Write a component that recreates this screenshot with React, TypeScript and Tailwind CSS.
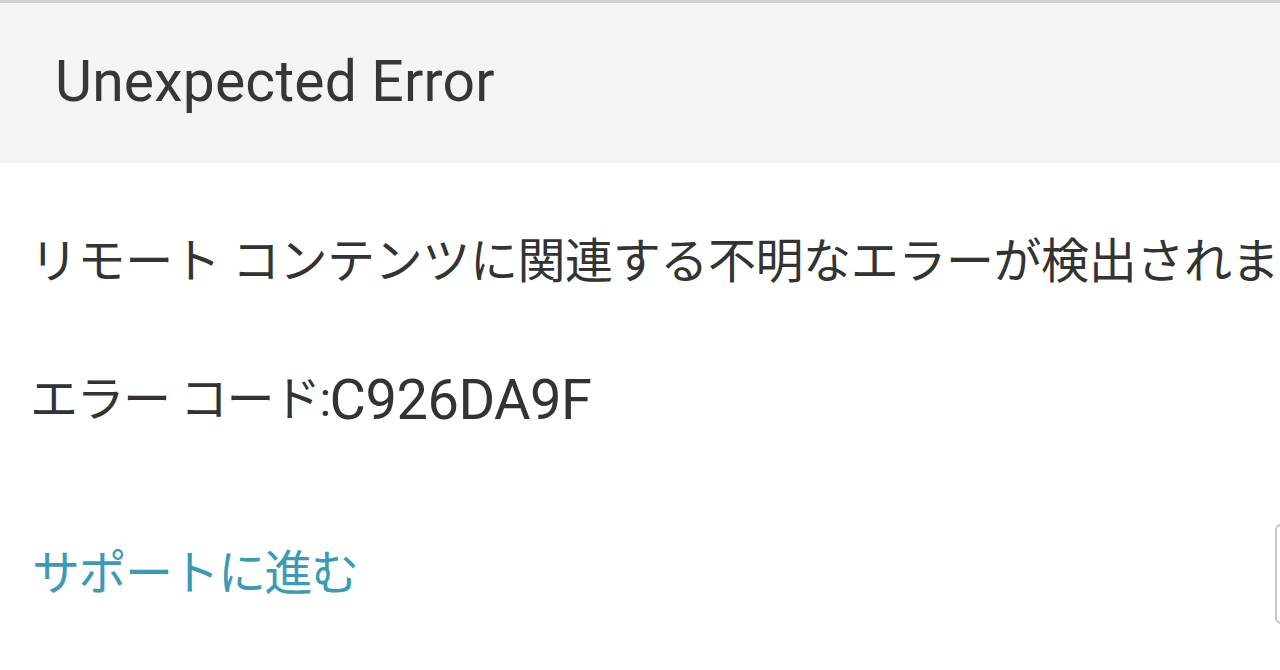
import React from 'react'

const font = { fontFamily: 'Roboto, "Noto Sans CJK JP", sans-serif' }

export default function App() {
  return (
    <div className="w-[1280px] h-[670px] overflow-hidden bg-white text-[#333333]" style={font}>
      {/* header */}
      <div className="h-[163px] bg-[#f4f4f4] border-t-[3px] border-[#d2d2d2] flex items-center pl-[55px]">
        <h1 className="text-[57px] leading-none font-normal text-[#363636] tracking-[0.2px] mb-[4px]">Unexpected Error</h1>
      </div>

      {/* body */}
      <div className="pt-[75px] pl-[30px]">
        <p className="text-[48px] leading-none whitespace-nowrap tracking-[-0.4px]">
          リモート コンテンツに関連する不明なエラーが検出されました。
        </p>
        <p className="mt-[90px] h-[48px] flex items-center text-[48px] leading-none whitespace-nowrap tracking-[-1.5px]">
          エラー コード:<span className="text-[56px] tracking-[-0.5px]">C926DA9F</span>
        </p>
        <div className="mt-[100px] flex items-center h-[100px]">
          <a href="#" className="text-[48px] leading-none text-[#3c9bb2] whitespace-nowrap tracking-[-1.5px] pl-[2px]">
            サポートに進む
          </a>
          <div className="flex-1" />
          <button className="shrink-0 w-[200px] h-[100px] mr-[-195px] rounded-[6px] border-2 border-[#c8c8c8] bg-white" />
        </div>
      </div>
    </div>
  )
}
